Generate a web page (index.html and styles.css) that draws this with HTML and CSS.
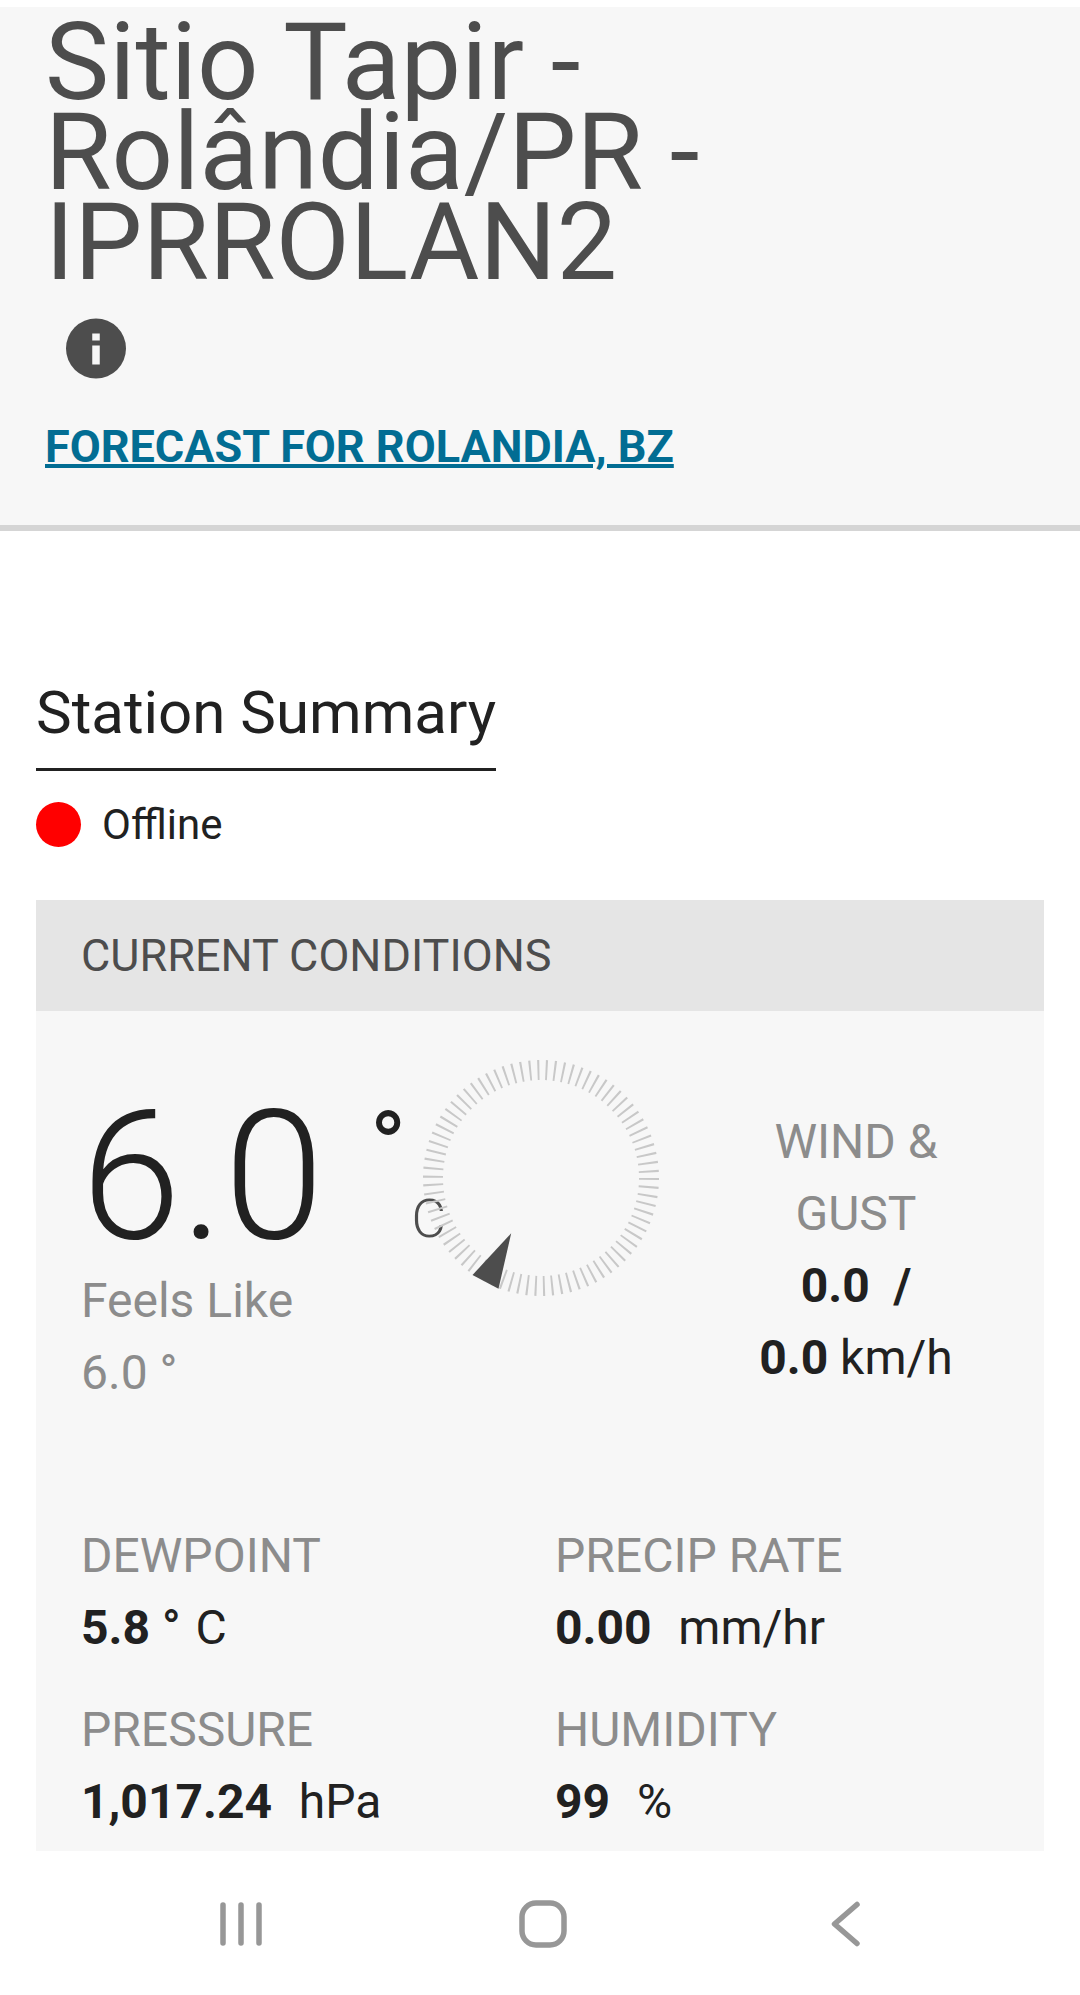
FILE: index.html
```html
<!DOCTYPE html>
<html lang="en">
<head>
<meta charset="utf-8">
<title>Sitio Tapir</title>
<link rel="stylesheet" href="styles.css">
</head>
<body>
<header class="hero">
  <h1 class="hero-title">Sitio Tapir - Rolândia/PR - IPRROLAN2</h1>
  <svg class="info-icon" viewBox="0 0 60 60"><circle cx="30" cy="30" r="30" fill="#4d4d4d"/><rect x="26.25" y="15" width="7.5" height="7" fill="#f7f7f7"/><rect x="26.25" y="27" width="7.5" height="19" fill="#f7f7f7"/></svg>
  <a class="forecast" href="#">FORECAST FOR ROLANDIA, BZ</a>
</header>
<main class="content">
  <h2 class="section-title"><span>Station Summary</span></h2>
  <div class="status"><span class="dot"></span><span class="status-text">Offline</span></div>
  <section class="card">
    <div class="card-head">CURRENT CONDITIONS</div>
    <div class="card-body">
      <div class="top-row">
        <div class="temp">
          <div class="temp-main"><span class="temp-value">6.0</span><span class="temp-deg">°</span><span class="temp-unit">C</span></div>
          <div class="label">Feels Like</div>
          <div class="label">6.0 °</div>
        </div>
        <svg class="gauge" viewBox="0 0 260 260">
          <circle class="ticks" cx="130" cy="130" r="108"/>
          <polygon points="100.2,185.3 61.5,227 87.5,240.7" fill="#4d4d4d"/>
        </svg>
        <div class="wind">
          <div class="label">WIND &amp;<br>GUST</div>
          <div class="value"><b>0.0</b>&nbsp; <b>/</b></div>
          <div class="value"><b>0.0</b> km/h</div>
        </div>
      </div>
      <div class="stats">
        <div class="stat"><div class="label">DEWPOINT</div><div class="value"><b>5.8 °</b> C</div></div>
        <div class="stat"><div class="label">PRECIP RATE</div><div class="value"><b>0.00</b>&nbsp; mm/hr</div></div>
        <div class="stat"><div class="label">PRESSURE</div><div class="value"><b>1,017.24</b>&nbsp; hPa</div></div>
        <div class="stat"><div class="label">HUMIDITY</div><div class="value"><b>99</b>&nbsp; %</div></div>
      </div>
    </div>
  </section>
</main>
<nav class="navbar">
  <svg class="nav-recent" viewBox="0 0 42 44"><path d="M3 3V41M21 3V41M39 3V41" class="nav-stroke"/></svg>
  <svg class="nav-home" viewBox="0 0 48 48"><rect x="3" y="3" width="42" height="42" rx="14" class="nav-stroke"/></svg>
  <svg class="nav-back" viewBox="0 0 32 48"><path d="M27 4.5L4.5 24L27 43.5" class="nav-stroke"/></svg>
</nav>
</body>
</html>
```
FILE: styles.css
```css
* { box-sizing: border-box; }
html, body { margin: 0; padding: 0; }
body { width: 1080px; height: 1995px; overflow: hidden; background: #fff; font-family: Roboto, sans-serif; color: #212121; position: relative; }
.hero { margin-top: 7px; height: 524px; background: #f7f7f7; border-bottom: 6px solid #d5d5d5; padding: 10px 36px 0 45px; }
.hero-title { margin: 0; width: 800px; font-size: 108px; line-height: 90px; font-weight: 400; color: #4d4d4d; }
.info-icon { display: block; width: 60px; height: 61px; margin: 31px 0 0 21px; }
.forecast { display: inline-block; margin-top: 43px; font-size: 45px; line-height: 50px; font-weight: 700; color: #026d93; text-decoration: underline; text-decoration-thickness: 4px; }
.content { padding: 0 36px; }
.section-title { margin: 146px 0 0; font-size: 60px; line-height: 72px; font-weight: 400; }
.section-title span { display: inline-block; padding-bottom: 19px; border-bottom: 3px solid #212121; }
.status { display: flex; align-items: center; gap: 21px; height: 48px; margin-top: 29px; font-size: 42px; line-height: 48px; }
.status-text { padding-top: 2px; }
.dot { width: 45px; height: 45px; border-radius: 50%; background: #f00; }
.card { margin-top: 52px; background: #f7f7f7; height: 1000px; }
.card-head { height: 111px; background: #e5e5e5; padding: 0 45px; font-size: 45px; line-height: 111px; color: #4d4d4d; }
.card-body { padding: 0 45px; }
.top-row { display: flex; align-items: flex-start; height: 509px; }
.temp { flex: 0 0 330px; min-width: 0; padding-top: 78px; }
.temp-main { display: flex; height: 176px; }
.temp-value { font-size: 180px; line-height: 176px; font-weight: 300; flex: none; }
.temp-deg { margin: 14px 0 0 46px; font-size: 98px; line-height: 90px; font-weight: 400; flex: none; }
.temp-unit { font-size: 53px; font-weight: 300; line-height: 50px; color: #4d4d4d; margin: 105px 0 0 5px; flex: none; }
.label { font-size: 48px; line-height: 72px; color: #8c8c8c; }
.value { font-size: 48px; line-height: 72px; }
.value b { font-weight: 700; }
.stat b { margin-right: 3px; }
.gauge { flex: none; margin-top: 37px; width: 260px; height: 260px; }
.ticks { fill: none; stroke: #c8c8c8; stroke-width: 20; stroke-dasharray: 2 6.275; }
.wind { flex: none; margin: 95px 0 0 65px; width: 240px; text-align: center; }
.stats { display: grid; grid-template-columns: 474px 1fr; row-gap: 30px; }
.navbar { position: absolute; left: 0; right: 0; top: 1851px; height: 144px; background: #fff; display: flex; align-items: flex-start; padding-left: 220px; }
.nav-stroke { fill: none; stroke: #979797; stroke-width: 5.5; stroke-linecap: round; stroke-linejoin: round; }
.nav-recent { flex: none; width: 42px; height: 44px; margin-top: 51px; }
.nav-home { flex: none; width: 48px; height: 48px; margin: 49px 0 0 257px; }
.nav-back { flex: none; width: 32px; height: 48px; margin: 49px 0 0 263px; }
```
